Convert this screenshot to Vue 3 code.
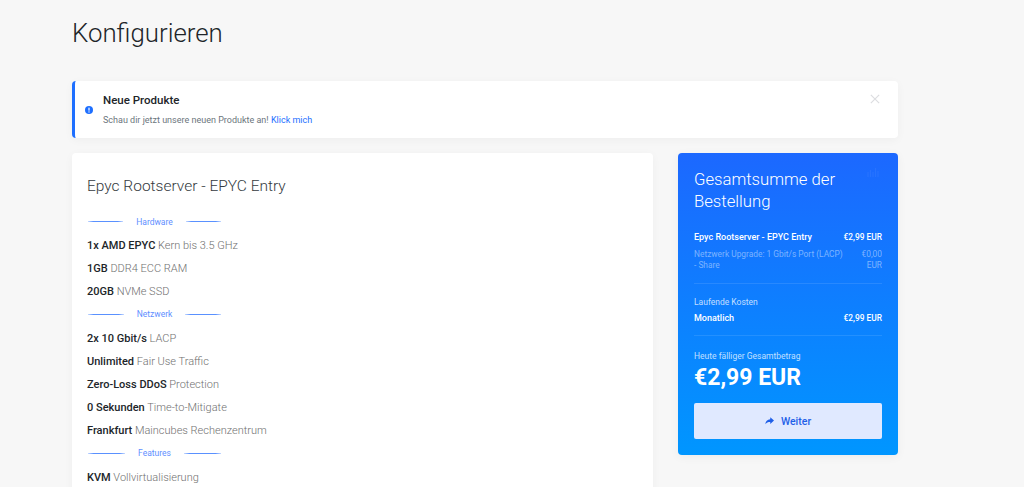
<template>
  <div class="page">
    <h1 class="page_title">Konfigurieren</h1>

    <!-- Hinweis -->
    <div class="alert">
      <svg class="alert_icon" viewBox="0 0 16 16" aria-hidden="true">
        <circle cx="8" cy="8" r="8" fill="#1e6fff" />
        <rect x="6.8" y="3" width="2.4" height="6.4" rx="0.8" fill="#fff" />
        <circle cx="8" cy="11.8" r="1.4" fill="#fff" />
      </svg>
      <div class="alert_body">
        <div class="alert_title">Neue Produkte</div>
        <div class="alert_text">Schau dir jetzt unsere neuen Produkte an! <a href="#">Klick mich</a></div>
      </div>
      <svg class="alert_close" viewBox="0 0 12 12" aria-hidden="true">
        <path d="M1 1l10 10M11 1L1 11" stroke="#dcdde0" stroke-width="1.4" fill="none" />
      </svg>
    </div>

    <div class="columns">
      <!-- Produkt -->
      <div class="product">
        <h2 class="product_title">Epyc Rootserver - EPYC Entry</h2>
        <template v-for="group in groups" :key="group.name">
          <div class="divider">
            <span class="divider_line"></span>
            <span class="divider_name">{{ group.name }}</span>
            <span class="divider_line"></span>
          </div>
          <div class="feature" v-for="item in group.items" :key="item[0]">
            <b>{{ item[0] }}</b> {{ item[1] }}
          </div>
        </template>
      </div>

      <!-- Bestellung -->
      <div class="summary">
        <svg class="summary_mark" viewBox="0 0 12 10" aria-hidden="true">
          <path d="M1 4v5M3.5 2v7M6 4v5M8.5 0v9M11 3v6" stroke="#fff" stroke-width="1.2" fill="none" />
        </svg>
        <h2 class="summary_title">Gesamtsumme der Bestellung</h2>
        <div class="row strong">
          <span class="name">Epyc Rootserver - EPYC Entry</span>
          <span class="price">€2,99 EUR</span>
        </div>
        <div class="row muted">
          <span>Netzwerk Upgrade: 1 Gbit/s Port (LACP) - Share</span>
          <span class="price wrap">€0,00 EUR</span>
        </div>
        <div class="line"></div>
        <div class="small_label">Laufende Kosten</div>
        <div class="row strong">
          <span class="name">Monatlich</span>
          <span class="price">€2,99 EUR</span>
        </div>
        <div class="line"></div>
        <div class="small_label due">Heute fälliger Gesamtbetrag</div>
        <div class="total">€2,99 EUR</div>
        <button class="next">
          <svg class="next_icon" viewBox="0 0 12 10" aria-hidden="true">
            <path d="M7 0l5 4.4L7 9V6.3C4 6.3 2 7.1.4 9.4.8 5.8 3 3.2 7 2.8z" fill="#1f5fe8" />
          </svg>
          Weiter
        </button>
      </div>
    </div>
  </div>
</template>

<script setup>
const groups = [
  {
    name: 'Hardware',
    items: [
      ['1x AMD EPYC', 'Kern bis 3.5 GHz'],
      ['1GB', 'DDR4 ECC RAM'],
      ['20GB', 'NVMe SSD']
    ]
  },
  {
    name: 'Netzwerk',
    items: [
      ['2x 10 Gbit/s', 'LACP'],
      ['Unlimited', 'Fair Use Traffic'],
      ['Zero-Loss DDoS', 'Protection'],
      ['0 Sekunden', 'Time-to-Mitigate'],
      ['Frankfurt', 'Maincubes Rechenzentrum']
    ]
  },
  {
    name: 'Features',
    items: [['KVM', 'Vollvirtualisierung']]
  }
]
</script>

<style>
html,
body {
  margin: 0;
  height: 487px;
  overflow: hidden;
  background: #f7f7f7;
}
</style>

<style scoped>
.page {
  width: 826px;
  margin-left: 72px;
  font-family: Roboto, sans-serif;
  color: #212529;
}

.page_title {
  margin: 0;
  padding-top: 18px;
  height: 81px;
  box-sizing: border-box;
  font-size: 25.8px;
  line-height: 31px;
  font-weight: 300;
}

.alert {
  display: flex;
  align-items: center;
  height: 57px;
  box-sizing: border-box;
  padding: 0 18px 0 10px;
  background: #fff;
  border-left: 3px solid #1e6fff;
  border-radius: 4px;
  box-shadow: 0 2px 10px rgba(0, 0, 0, 0.04);
}

.alert_icon {
  width: 8px;
  height: 8px;
  margin-right: 10px;
}

.alert_body {
  flex: 1;
}

.alert_title {
  font-size: 11.5px;
  line-height: 14px;
  font-weight: 500;
  margin-bottom: 7px;
}

.alert_text {
  font-size: 9px;
  line-height: 13px;
  color: #6c757d;
}

.alert_text a {
  color: #1e6fff;
  text-decoration: none;
  font-weight: 400;
}

.alert_close {
  width: 10px;
  height: 10px;
  align-self: flex-start;
  margin-top: 13px;
}

.columns {
  display: flex;
  align-items: flex-start;
  justify-content: space-between;
  margin-top: 15px;
}

.product {
  width: 581px;
  box-sizing: border-box;
  padding: 23px 15px 40px;
  background: #fff;
  border-radius: 4px;
  box-shadow: 0 2px 10px rgba(0, 0, 0, 0.04);
}

.product_title {
  margin: 0 0 19px;
  font-size: 15.5px;
  line-height: 20px;
  font-weight: 300;
  color: #343a40;
}

.divider {
  display: flex;
  align-items: center;
  width: 133px;
  height: 13px;
  gap: 13px;
  margin-bottom: 10px;
  margin-left: 1px;
}

.divider_line {
  flex: 1;
  height: 1px;
  background: linear-gradient(90deg, rgba(90, 145, 255, 0.35), #5a91ff 15%, #5a91ff 85%, rgba(90, 145, 255, 0.35));
}

.divider_name {
  font-size: 8.5px;
  color: #5f8fff;
}

.feature {
  height: 23.2px;
  font-size: 11px;
  line-height: 15px;
  font-weight: 300;
  color: #707070;
}

.feature b {
  font-weight: 500;
  color: #212529;
}

.summary {
  position: relative;
  width: 220px;
  height: 302px;
  box-sizing: border-box;
  padding: 16px 16px 15px;
  background: linear-gradient(180deg, #1c68ff 0%, #0096ff 100%);
  border-radius: 4px;
  box-shadow: 0 2px 10px rgba(0, 0, 0, 0.05);
  color: #fff;
}

.summary_mark {
  position: absolute;
  top: 15px;
  right: 19px;
  width: 12px;
  height: 10px;
  opacity: 0.05;
}

.summary_title {
  margin: 0 0 19px;
  font-size: 16.7px;
  line-height: 22px;
  font-weight: 300;
}

.row {
  display: flex;
  justify-content: space-between;
  gap: 14px;
  font-size: 8.4px;
  line-height: 11.5px;
}

.row.strong {
  font-weight: 500;
  margin-bottom: 5px;
}

.row .name {
  font-size: 9px;
}

.row.muted {
  color: rgba(255, 255, 255, 0.45);
}

.price {
  flex-shrink: 0;
  text-align: right;
}

.price.wrap {
  width: 21px;
}

.line {
  height: 1px;
  margin: 11px 0 13px;
  background: rgba(255, 255, 255, 0.1);
}

.small_label {
  font-size: 8.5px;
  line-height: 11px;
  color: rgba(255, 255, 255, 0.75);
  margin: 0 0 5px;
}

.small_label.due {
  margin-top: 15px;
  margin-bottom: 0;
}

.total {
  font-size: 23px;
  line-height: 32px;
  font-weight: 700;
  margin-bottom: 9px;
}

.next {
  display: flex;
  align-items: center;
  justify-content: center;
  gap: 7px;
  width: 100%;
  height: 36px;
  border: none;
  border-radius: 2px;
  background: #e0e9ff;
  color: #1f5fe8;
  font-family: inherit;
  font-size: 10.5px;
  font-weight: 500;
}

.next_icon {
  width: 9px;
  height: 8px;
}
</style>
